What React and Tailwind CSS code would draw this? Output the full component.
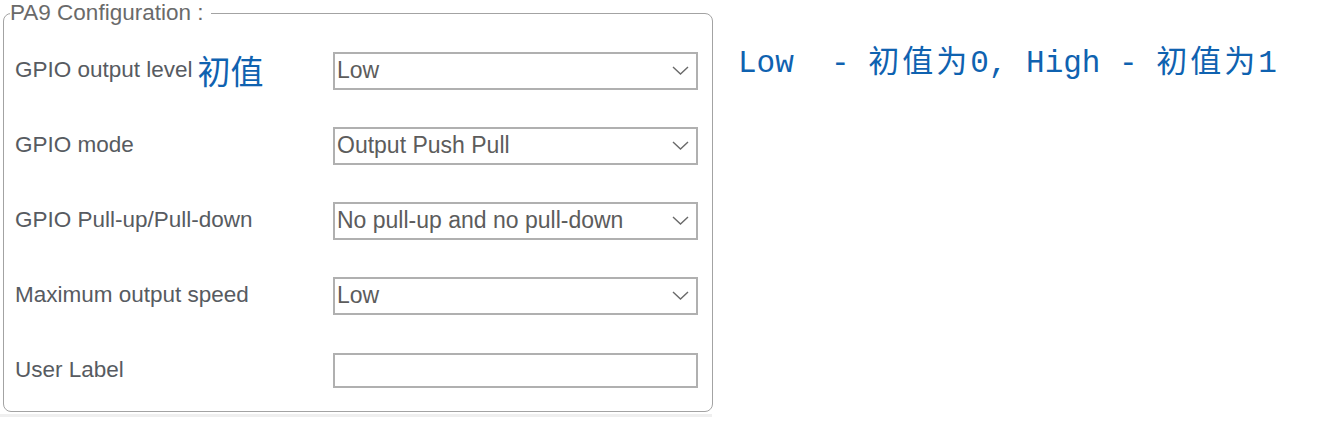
import React from 'react';

const rows = [
  { label: 'GPIO output level', value: 'Low', note: '初值' },
  { label: 'GPIO mode', value: 'Output Push Pull' },
  { label: 'GPIO Pull-up/Pull-down', value: 'No pull-up and no pull-down' },
  { label: 'Maximum output speed', value: 'Low' },
  { label: 'User Label', value: null, input: true },
];

function Chevron() {
  return (
    <svg width="17" height="9" viewBox="0 0 17 9" className="shrink-0">
      <polyline points="1,1 8.5,8 16,1" fill="none" stroke="#6a6a6a" strokeWidth="1.4" />
    </svg>
  );
}

function Select({ value }) {
  return (
    <div className="flex h-[38px] w-[365px] items-center justify-between border-2 border-[#b0b0b0] bg-white pl-[2px] pr-[7px]">
      <span className="text-[23px] leading-none text-[#5c5c5c]">{value}</span>
      <Chevron />
    </div>
  );
}

export default function App() {
  return (
    <div className="h-[448px] w-[1342px] bg-white font-['Liberation_Sans',Arial,sans-serif]">
      <div className="flex items-start">
        <div>
          <fieldset className="ml-[3px] w-[710px] rounded-[8px] border-[1.5px] border-[#a3a3a3]">
            <legend className="ml-[6px] pr-[8px] text-[22.5px] leading-[26px] text-[#6a6a6a]">
              PA9 Configuration :
            </legend>
            <div className="pl-[11px] pt-[7px] pb-[3px]">
              {rows.map((row) => (
                <div key={row.label} className="grid h-[75px] grid-cols-[318px_365px] items-center">
                  <div className="flex items-center gap-[5px]">
                    <span className="text-[22.5px] leading-none text-[#575b61]">{row.label}</span>
                    {row.note && (
                      <span className="font-['Noto_Sans_CJK_SC',sans-serif] text-[33px] leading-none text-[#0f62b0]">
                        {row.note}
                      </span>
                    )}
                  </div>
                  {row.input ? (
                    <div className="h-[35px] w-[365px] border-2 border-[#b0b0b0] bg-white" />
                  ) : (
                    <Select value={row.value} />
                  )}
                </div>
              ))}
            </div>
          </fieldset>
          <div className="mt-[2px] h-[3px] w-[712px] bg-[#efefef]" />
        </div>
        <p className="ml-[25px] mt-[41px] whitespace-pre font-['Liberation_Mono','Noto_Sans_CJK_SC',monospace] text-[31px] leading-[36px] text-[#0f62b0]">
          {'Low  - '}
          <span className="font-['Noto_Sans_CJK_SC',sans-serif] tracking-[3px]">初值为</span>
          {'0, High - '}
          <span className="font-['Noto_Sans_CJK_SC',sans-serif] tracking-[3px]">初值为</span>
          {'1'}
        </p>
      </div>
    </div>
  );
}
